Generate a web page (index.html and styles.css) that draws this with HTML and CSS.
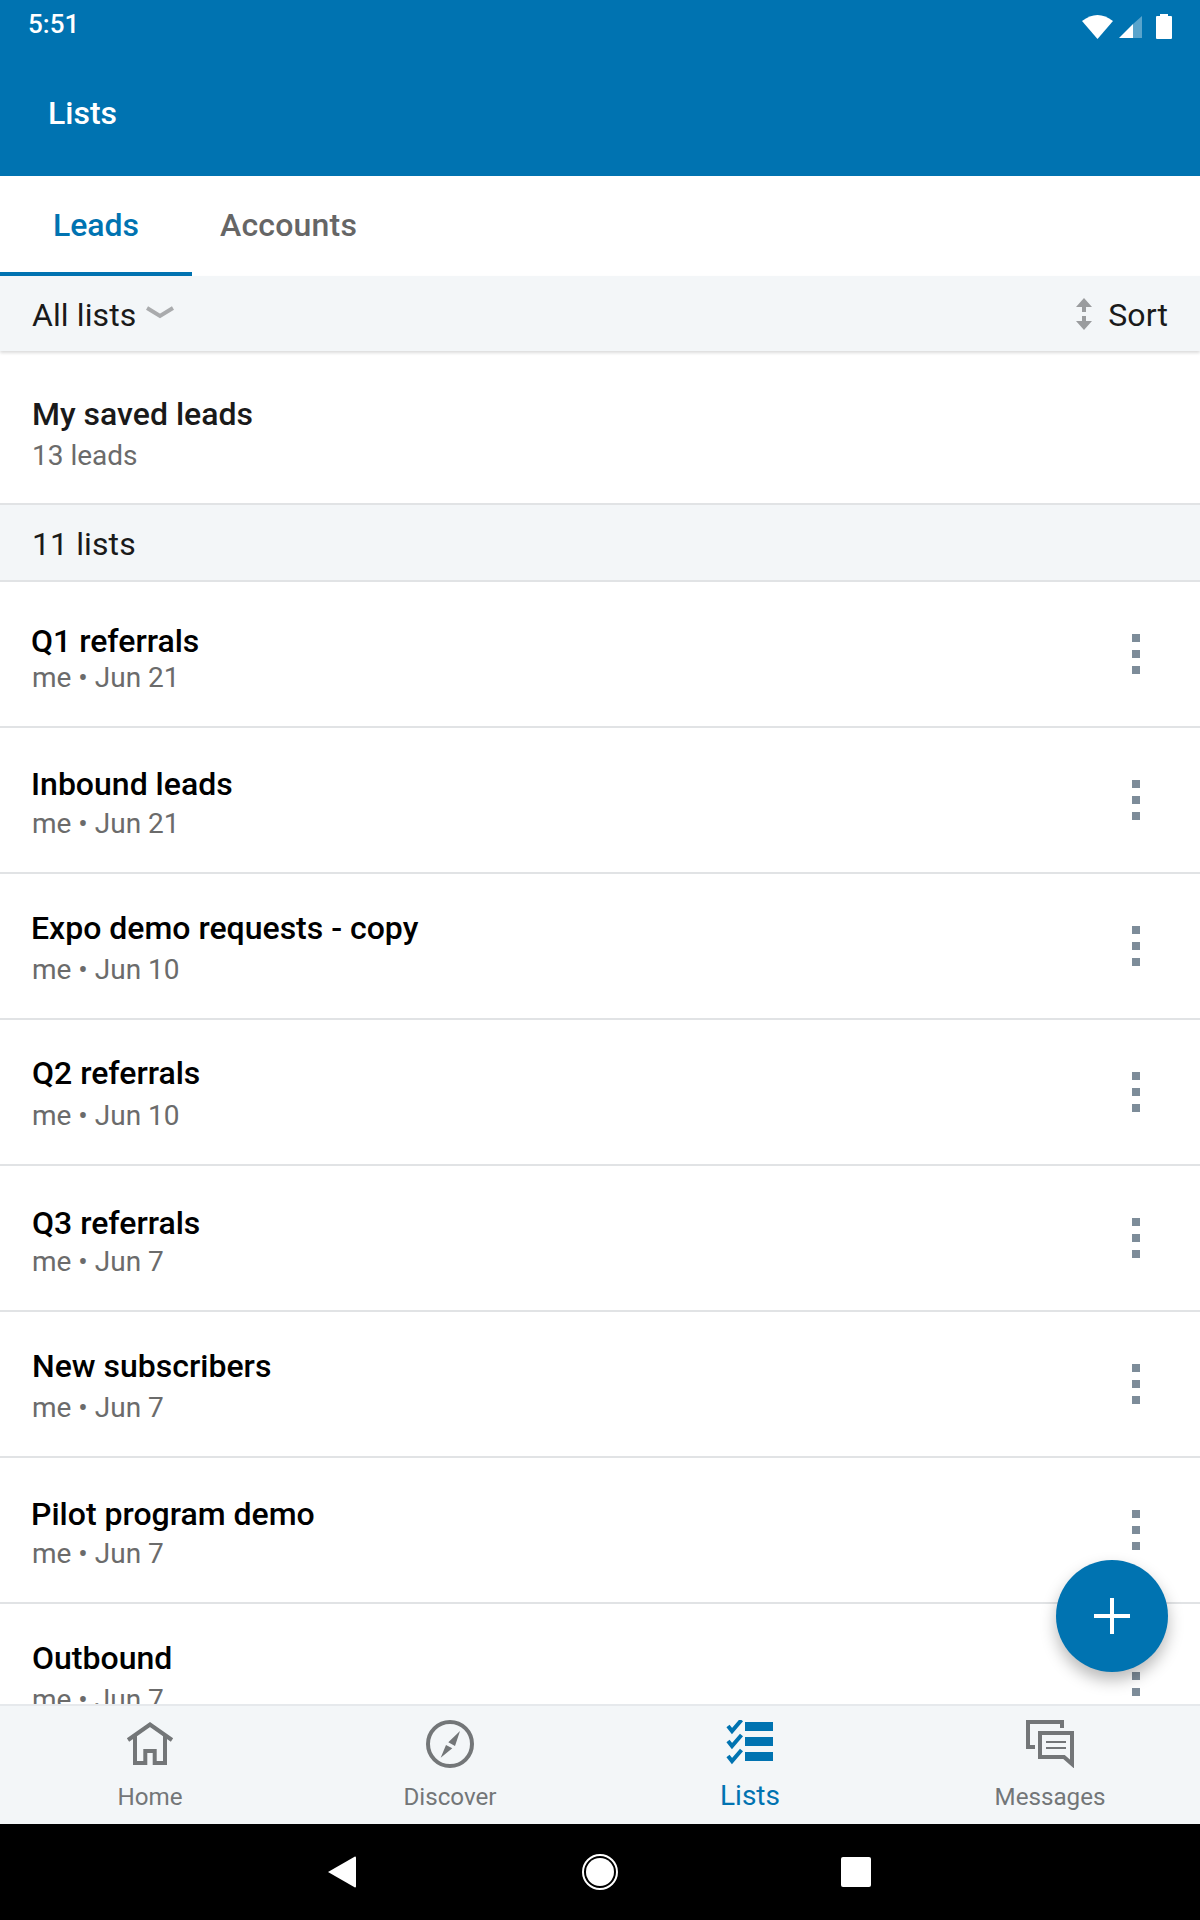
FILE: index.html
```html
<!DOCTYPE html>
<html lang="en">
<head>
<meta charset="utf-8">
<title>Lists</title>
<link rel="stylesheet" href="styles.css">
</head>
<body>
<div class="screen">
  <header class="appbar">
    <div class="status">
      <span class="time">5:51</span>
      <svg class="status-icons" width="92" height="30" viewBox="0 0 92 30">
        <path d="M2 10 Q17.5-2 33 10 L17.5 28Z" fill="#fff"/>
        <path d="M39 27 L53 13 V27Z" fill="#fff"/>
        <path d="M53 13 L62 5 V27 H53Z" fill="#fff" fill-opacity=".35"/>
        <path d="M80 3 H88 V5 H91 a1 1 0 0 1 1 1 V27 a1 1 0 0 1-1 1 H77 a1 1 0 0 1-1-1 V6 a1 1 0 0 1 1-1 H80Z" fill="#fff"/>
      </svg>
    </div>
    <h1 class="title">Lists</h1>
  </header>

  <nav class="tabs">
    <a class="tab tab-active">Leads</a>
    <a class="tab">Accounts</a>
  </nav>

  <div class="filter">
    <div class="filter-left">
      <span>All lists</span>
      <svg class="chevron" width="28" height="13" viewBox="0 0 28 13"><path d="M1 2 L14 10 L27 2" fill="none" stroke="#a9abad" stroke-width="4"/></svg>
    </div>
    <div class="filter-right">
      <svg class="sort-icon" width="16" height="32" viewBox="0 0 16 32"><path d="M8 0 L16 9 H10 V14 H6 V9 H0Z M6 18 H10 V23 H16 L8 32 L0 23 H6Z" fill="#9a9c9e"/></svg>
      <span>Sort</span>
    </div>
  </div>

  <main class="content">
    <section class="saved">
      <div class="saved-name">My saved leads</div>
      <div class="sub">13 leads</div>
    </section>
    <div class="count">11 lists</div>

    <article class="row">
      <div class="row-text"><div class="name lift-n3">Q1 referrals</div><div class="sub">me • Jun 21</div></div>
      <div class="kebab"><i></i><i></i><i></i></div>
    </article>
    <article class="row">
      <div class="row-text"><div class="name">Inbound leads</div><div class="sub">me • Jun 21</div></div>
      <div class="kebab"><i></i><i></i><i></i></div>
    </article>
    <article class="row">
      <div class="row-text"><div class="name lift-2">Expo demo requests - copy</div><div class="sub">me • Jun 10</div></div>
      <div class="kebab"><i></i><i></i><i></i></div>
    </article>
    <article class="row">
      <div class="row-text"><div class="name lift-3 nudge">Q2 referrals</div><div class="sub">me • Jun 10</div></div>
      <div class="kebab"><i></i><i></i><i></i></div>
    </article>
    <article class="row">
      <div class="row-text"><div class="name lift-n1 nudge">Q3 referrals</div><div class="sub">me • Jun 7</div></div>
      <div class="kebab"><i></i><i></i><i></i></div>
    </article>
    <article class="row">
      <div class="row-text"><div class="name lift-2 nudge">New subscribers</div><div class="sub">me • Jun 7</div></div>
      <div class="kebab"><i></i><i></i><i></i></div>
    </article>
    <article class="row">
      <div class="row-text"><div class="name">Pilot program demo</div><div class="sub">me • Jun 7</div></div>
      <div class="kebab"><i></i><i></i><i></i></div>
    </article>
    <article class="row">
      <div class="row-text"><div class="name lift-2 nudge">Outbound</div><div class="sub">me • Jun 7</div></div>
      <div class="kebab"><i></i><i></i><i></i></div>
    </article>

    <button class="fab" aria-label="Add">
      <svg width="36" height="36" viewBox="0 0 36 36"><path d="M16 0 H20 V16 H36 V20 H20 V36 H16 V20 H0 V16 H16Z" fill="#fff"/></svg>
    </button>
  </main>

  <nav class="bottom">
    <a class="bottom-item">
      <svg class="bottom-icon" width="48" height="48" viewBox="0 0 48 48"><path d="M2 20 L24 4.500 L46 20 M9 16 V43 H19.300 V31 H28.700 V43 H39 V16" fill="none" stroke="#737678" stroke-width="4"/></svg>
      <span>Home</span>
    </a>
    <a class="bottom-item">
      <svg class="bottom-icon" width="48" height="48" viewBox="0 0 48 48"><circle cx="24" cy="24" r="22" fill="none" stroke="#737678" stroke-width="4"/><path d="M34 11 L22.300 22.300 L29 26Z M14.700 37.700 L20 25 L26.300 28.300Z" fill="#737678"/></svg>
      <span>Discover</span>
    </a>
    <a class="bottom-item bottom-active">
      <svg class="bottom-icon" width="48" height="48" viewBox="0 0 48 48"><path d="M19 2 H47 V11 H19Z M19 17 H47 V26 H19Z M19 32 H47 V41 H19Z" fill="#0073b1"/><path d="M2 6 L6 11 L15.500 0 M2 21 L6 26 L15.500 15 M2 36 L6 41 L15.500 30" fill="none" stroke="#0073b1" stroke-width="4"/></svg>
      <span>Lists</span>
    </a>
    <a class="bottom-item">
      <svg class="bottom-icon" width="48" height="48" viewBox="0 0 48 48"><path d="M9 27 H2 V2 H36 V8" fill="none" stroke="#737678" stroke-width="4"/><path d="M14 13 H46 V44 L38 37 H14Z" fill="none" stroke="#737678" stroke-width="4"/><path d="M20 22 H40 M20 28 H40" stroke="#737678" stroke-width="2"/></svg>
      <span>Messages</span>
    </a>
  </nav>

  <footer class="sysnav">
    <svg width="28" height="32" viewBox="0 0 28 32"><path d="M0 16 L27 0.500 a1 1 0 0 1 1 1 V30.500 a1 1 0 0 1-1 1Z" fill="#fff"/></svg>
    <svg width="36" height="36" viewBox="0 0 36 36"><circle cx="18" cy="18" r="17" fill="none" stroke="#fff" stroke-width="2"/><circle cx="18" cy="18" r="14" fill="#fff"/></svg>
    <div class="sys-square"></div>
  </footer>
</div>
</body>
</html>
```
FILE: styles.css
```css
* { box-sizing: border-box; }
html, body { margin: 0; padding: 0; }
body { font-family: Roboto, "Liberation Sans", sans-serif; background: #fff; }

.screen { width: 1200px; height: 1920px; display: flex; flex-direction: column; overflow: hidden; }

.appbar { height: 176px; background: #0073b1; color: #fff; flex: none; }
.status { height: 48px; padding: 6px 28px 0 28px; display: flex; justify-content: space-between; align-items: flex-start; }
.time { font-size: 26px; font-weight: 500; line-height: 36px; }
.status-icons { margin-top: 5px; }
.title { margin: 0; padding: 40px 0 0 48px; font-size: 32px; font-weight: 500; line-height: 50px; }

.tabs { height: 100px; flex: none; display: flex; background: #fff; }
.tab { width: 192px; height: 100px; padding-top: 27px; font-size: 32px; font-weight: 500; line-height: 44px; text-align: center; color: #666; }
.tab + .tab { width: auto; padding: 27px 0 0 28px; letter-spacing: .2px; }
.tab-active { color: #0073b1; border-bottom: 4px solid #0073b1; }

.filter { height: 75px; flex: none; position: relative; z-index: 1; background: #f3f6f8; display: flex; justify-content: space-between; align-items: center; padding: 2px 32px 0 32px; font-size: 32px; letter-spacing: .1px; color: #1a1a1a; box-shadow: 0 2px 3px rgba(0,0,0,.14); }
.filter-left { display: flex; align-items: center; gap: 10px; }
.filter-right { display: flex; align-items: center; gap: 16px; }
.chevron { margin-top: -4px; }
.sort-icon { margin-top: -2px; }

.content { flex: 1; position: relative; overflow: hidden; background: #fff; }

.saved { height: 154px; padding-top: 43px; border-bottom: 2px solid #e1e3e5; }
.saved-name { font-size: 32px; font-weight: 500; line-height: 40px; color: #1a1a1a; padding-left: 32px; }
.saved .sub { padding: 4px 0 0 31px; }

.count { height: 77px; background: #f3f6f8; border-bottom: 2px solid #e1e3e5; padding: 19px 0 0 32px; font-size: 32px; line-height: 40px; letter-spacing: .1px; color: #1a1a1a; }

.row { height: 146px; border-bottom: 2px solid #e1e3e5; display: flex; justify-content: space-between; align-items: center; padding: 0 60px 0 31px; }
.row-text { align-self: flex-start; padding-top: 36px; }
.name { font-size: 32px; font-weight: 500; line-height: 40px; color: #000; }
.sub { font-size: 28px; line-height: 36px; color: #6b6b6b; margin-left: 1px; padding-top: 2px; }
.lift-2 { margin-top: -2px; margin-bottom: 2px; }
.lift-3 { margin-top: -3px; margin-bottom: 3px; }
.lift-n1 { margin-top: 1px; margin-bottom: -1px; }
.lift-n3 { margin-top: 3px; margin-bottom: -3px; }
.nudge { margin-left: 1px; }

.kebab { display: flex; flex-direction: column; gap: 8px; }
.kebab i { display: block; width: 8px; height: 8px; background: #7d8c99; }

.fab { position: absolute; left: 1056px; top: 1209px; width: 112px; height: 112px; padding: 0; border: 0; border-radius: 50%; background: #0073b1; display: flex; align-items: center; justify-content: center; box-shadow: 0 8px 16px rgba(0,0,0,.28); }

.bottom { height: 120px; flex: none; position: relative; background: #f3f6f8; border-top: 2px solid #e6e9ec; display: grid; grid-template-columns: repeat(4, 1fr); font-size: 24.2px; color: #737678; }
.bottom-item { display: flex; flex-direction: column; align-items: center; padding-top: 14px; }
.bottom-item span { line-height: 32px; margin-top: 13px; }
.bottom-icon { display: block; }
.bottom-active { color: #0073b1; font-size: 28px; }
.bottom-active span { margin-top: 12px; }

.sysnav { height: 96px; flex: none; background: #000; position: relative; display: grid; grid-template-columns: 356px 244px 271px; align-items: center; justify-items: end; }
.sysnav svg:nth-child(2) { justify-self: end; margin-right: -18px; }
.sys-square { width: 30px; height: 30px; background: #fff; border-radius: 2px; }
```
